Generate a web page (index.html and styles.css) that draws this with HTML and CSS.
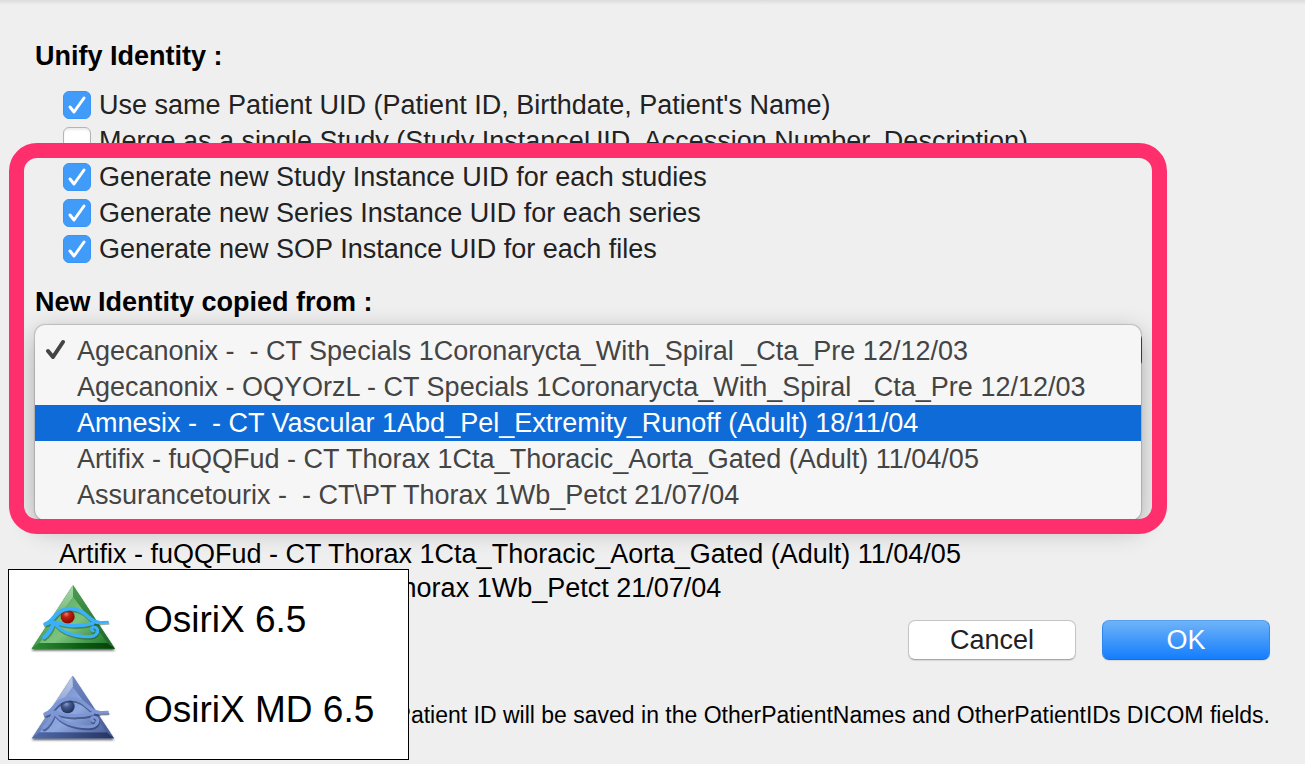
FILE: index.html
```
<!DOCTYPE html>
<html lang="en">
<head>
    <meta charset="UTF-8">
    <title>Anonymize</title>
    <link rel="stylesheet" href="styles.css">
</head>
<body>
    <form class="dialog">
        <h2>Unify Identity :</h2>
        <div class="options">
            <label><input type="checkbox" checked> Use same Patient UID (Patient ID, Birthdate, Patient's Name)</label>
            <label><input type="checkbox"> Merge as a single Study (Study InstanceUID, Accession Number, Description)</label>
            <label><input type="checkbox" checked> Generate new Study Instance UID for each studies</label>
            <label><input type="checkbox" checked> Generate new Series Instance UID for each series</label>
            <label><input type="checkbox" checked> Generate new SOP Instance UID for each files</label>
        </div>

        <h2><label for="identity">New Identity copied from :</label></h2>
        <div class="popup">
            <select id="identity" class="popup-select">
                <option>Agecanonix</option>
            </select>
            <div class="menu">
                <button type="button" class="menu-item">
                    <svg class="tick" viewBox="0 0 20 22"><path d="M2 12 L7 18 L17 3"/></svg>
                    Agecanonix -&nbsp; - CT Specials 1Coronarycta_With_Spiral _Cta_Pre 12/12/03
                </button>
                <button type="button" class="menu-item">Agecanonix - OQYOrzL - CT Specials 1Coronarycta_With_Spiral _Cta_Pre 12/12/03</button>
                <button type="button" class="menu-item selected">Amnesix -&nbsp; - CT Vascular 1Abd_Pel_Extremity_Runoff (Adult) 18/11/04</button>
                <button type="button" class="menu-item">Artifix - fuQQFud - CT Thorax 1Cta_Thoracic_Aorta_Gated (Adult) 11/04/05</button>
                <button type="button" class="menu-item">Assurancetourix -&nbsp; - CT\PT Thorax 1Wb_Petct 21/07/04</button>
            </div>
        </div>

        <ul class="studies">
            <li>Artifix - fuQQFud - CT Thorax 1Cta_Thoracic_Aorta_Gated (Adult) 11/04/05</li>
            <li>Assurancetourix -&nbsp; - CT\PT Thorax 1Wb_Petct 21/07/04</li>
        </ul>

        <div class="buttons">
            <button type="button" class="btn">Cancel</button>
            <button type="submit" class="btn btn-default">OK</button>
        </div>
        <p class="note">Patient ID will be saved in the OtherPatientNames and OtherPatientIDs DICOM fields.</p>

        <div class="highlight"></div>

        <div class="versions">
            <div class="version">
                <svg class="logo" viewBox="0 0 330 270">
                    <defs>
                        <linearGradient id="gFace" x1="0" y1="0.2" x2="1" y2="1">
                            <stop offset="0" stop-color="#5aa95f"/>
                            <stop offset="0.5" stop-color="#7cc47e"/>
                            <stop offset="1" stop-color="#247b2c"/>
                        </linearGradient>
                        <linearGradient id="gLeft" x1="0" y1="0" x2="0" y2="1">
                            <stop offset="0" stop-color="#a9d6aa"/>
                            <stop offset="1" stop-color="#3b9a43"/>
                        </linearGradient>
                        <linearGradient id="gRight" x1="0" y1="0" x2="0" y2="1">
                            <stop offset="0" stop-color="#4c9e51"/>
                            <stop offset="1" stop-color="#1c6524"/>
                        </linearGradient>
                        <linearGradient id="gBase">
                            <stop offset="0" stop-color="#2f8d37"/>
                            <stop offset="0.6" stop-color="#0c5a15"/>
                            <stop offset="1" stop-color="#06400b"/>
                        </linearGradient>
                        <radialGradient id="gPupil" cx="0.4" cy="0.3" r="0.7">
                            <stop offset="0" stop-color="#f08070"/>
                            <stop offset="0.35" stop-color="#c81e10"/>
                            <stop offset="1" stop-color="#7c0800"/>
                        </radialGradient>
                        <filter id="shadow" x="-20%" y="-20%" width="140%" height="140%">
                            <feDropShadow dx="0" dy="5" stdDeviation="3" flood-color="#000" flood-opacity="0.7"/>
                        </filter>
                        <g id="eye" fill="none" stroke-linecap="round" stroke-linejoin="round">
                            <path stroke-width="11" d="M75 147 C100 143 106 101 150 101 C200 101 206 142 236 142"/>
                            <path stroke-width="7" d="M232 142 L263 141"/>
                            <path stroke-width="10" d="M80 146 C94 140 104 140 116 145 C145 155 188 154 219 145"/>
                            <path stroke-width="12" d="M101 145 C96 158 85 179 72 187"/>
                            <path stroke-width="9" d="M105 145 C120 170 158 184 203 185 C233 186 241 165 226 157 C216 153 210 163 219 168"/>
                        </g>
                    </defs>
                    <path filter="url(#shadow)" fill="#2b8533" d="M159 31 L285 221 L35 221 Z"/>
                    <path fill="url(#gLeft)" d="M159 31 L160 66 L58 204 L35 221 Z"/>
                    <path fill="url(#gRight)" d="M159 31 L285 221 L262 204 L160 66 Z"/>
                    <path fill="url(#gBase)" d="M35 221 L58 204 L262 204 L285 221 Z"/>
                    <path fill="url(#gFace)" d="M160 66 L262 204 L58 204 Z"/>
                    <circle cx="143" cy="125" r="21" fill="url(#gPupil)"/>
                    <use href="#eye" stroke="#14502a" opacity="0.45" transform="translate(2 5)"/>
                    <use href="#eye" stroke="#3cb0fa"/>
                </svg>
                <span>OsiriX 6.5</span>
            </div>
            <div class="version">
                <svg class="logo" viewBox="0 0 330 270">
                    <defs>
                        <linearGradient id="bFace" x1="0" y1="0.2" x2="1" y2="1">
                            <stop offset="0" stop-color="#7590cf"/>
                            <stop offset="0.5" stop-color="#8fa8e0"/>
                            <stop offset="1" stop-color="#4c629f"/>
                        </linearGradient>
                        <linearGradient id="bLeft" x1="0" y1="0" x2="0" y2="1">
                            <stop offset="0" stop-color="#c0cdea"/>
                            <stop offset="1" stop-color="#5c77b8"/>
                        </linearGradient>
                        <linearGradient id="bRight" x1="0" y1="0" x2="0" y2="1">
                            <stop offset="0" stop-color="#728bc6"/>
                            <stop offset="1" stop-color="#44598f"/>
                        </linearGradient>
                        <linearGradient id="bBase">
                            <stop offset="0" stop-color="#516cab"/>
                            <stop offset="0.6" stop-color="#364a80"/>
                            <stop offset="1" stop-color="#24335e"/>
                        </linearGradient>
                        <radialGradient id="bPupil" cx="0.4" cy="0.3" r="0.7">
                            <stop offset="0" stop-color="#93a5ce"/>
                            <stop offset="0.4" stop-color="#43598f"/>
                            <stop offset="1" stop-color="#1f2f58"/>
                        </radialGradient>
                    </defs>
                    <path filter="url(#shadow)" fill="#536aa5" d="M158 32 L282 220 L36 220 Z"/>
                    <path fill="url(#bLeft)" d="M158 32 L159 66 L59 202 L36 220 Z"/>
                    <path fill="url(#bRight)" d="M158 32 L282 220 L260 202 L159 66 Z"/>
                    <path fill="url(#bBase)" d="M36 220 L59 202 L260 202 L282 220 Z"/>
                    <path fill="url(#bFace)" d="M159 66 L260 202 L59 202 Z"/>
                    <circle cx="143" cy="124" r="21" fill="url(#bPupil)"/>
                    <use href="#eye" stroke="#26355f" opacity="0.6" transform="translate(2 6)"/>
                    <use href="#eye" stroke="#7d97d6"/>
                </svg>
                <span>OsiriX MD 6.5</span>
            </div>
        </div>
    </form>
</body>
</html>
```

FILE: styles.css
```
* {
    box-sizing: border-box;
}
body {
    margin: 0;
    background: #efefef;
    color: #000;
    font-family: "Helvetica Neue", "Liberation Sans", Arial, sans-serif;
    font-size: 27px;
    line-height: 36px;
}
.dialog {
    position: relative;
    min-height: 100vh;
    padding: 38px 35px 0;
    background: linear-gradient(#dcdcdc, #efefef 5px);
    white-space: nowrap;
    overflow: hidden;
}
h2 {
    margin: 0;
    font-size: 27px;
    font-weight: bold;
}
.options {
    display: flex;
    flex-direction: column;
    align-items: flex-start;
    margin: 13px 0 17px 28px;
    color: #222;
}
.options label {
    display: flex;
    align-items: center;
    gap: 8px;
}
input[type="checkbox"] {
    appearance: none;
    width: 28px;
    height: 28px;
    margin: 0;
    border: 1px solid #b4b4b4;
    border-radius: 6px;
    background: #fff;
    box-shadow: inset 0 2px 2px rgba(0, 0, 0, 0.08);
}
input[type="checkbox"]:checked {
    border-color: #3a94f5;
    background: #419bf9 url("data:image/svg+xml,%3Csvg xmlns='http://www.w3.org/2000/svg' viewBox='0 0 26 26'%3E%3Cpath d='M6 15 L10 20 L20 6' fill='none' stroke='%23fff' stroke-width='3' stroke-linecap='round' stroke-linejoin='round'/%3E%3C/svg%3E") center / 26px 26px no-repeat;
    box-shadow: none;
}

/* pop-up button with its menu open on top of it */
.popup {
    position: relative;
    height: 42px;
    margin: 5px 128px 0 0;
}
.popup-select {
    appearance: none;
    width: 100%;
    height: 34px;
    margin-top: 8px;
    border: 0;
    border-radius: 6px;
    background: #1459b4;
    color: #fff;
    font: inherit;
}
.menu {
    position: absolute;
    top: 0;
    left: 0;
    right: 1px;
    padding: 8px 0 7px;
    border-radius: 10px;
    background: #f6f6f6;
    box-shadow: 0 0 1px 1px rgba(0, 0, 0, 0.16), 0 8px 26px rgba(0, 0, 0, 0.3);
}
.menu-item {
    display: block;
    position: relative;
    width: 100%;
    height: 36px;
    padding: 0 0 0 42px;
    border: 0;
    background: none;
    color: #444;
    font: inherit;
    text-align: left;
}
.menu-item.selected {
    background: #0f6bd7;
    color: #fff;
}
.tick {
    position: absolute;
    left: 11px;
    top: 6px;
    width: 20px;
    height: 22px;
    fill: none;
    stroke: #444;
    stroke-width: 4;
    stroke-linecap: round;
    stroke-linejoin: round;
}

.studies {
    margin: 170px 0 0 24px;
    padding: 0;
    list-style: none;
    line-height: 34px;
}
.buttons {
    display: flex;
    justify-content: flex-end;
    gap: 26px;
    margin-top: 15px;
}
.btn {
    width: 168px;
    height: 40px;
    padding: 0;
    border: 1px solid #c4c4c4;
    border-bottom-color: #a8a8a8;
    border-radius: 7px;
    background: #fff;
    box-shadow: 0 1px 1px rgba(0, 0, 0, 0.1);
    color: #222;
    font: inherit;
}
.btn-default {
    border-color: #56a0ec #2f87f0 #1a6fe0;
    background: linear-gradient(#6fb3f8, #147dfd);
    color: #fff;
}
.note {
    margin: 37px 0 0;
    font-size: 23px;
    text-align: right;
}

/* frame drawn over the dialog */
.highlight {
    position: absolute;
    top: 143px;
    left: 9px;
    right: 138px;
    height: 391px;
    border: 15px solid #ff2f6e;
    border-radius: 28px;
    pointer-events: none;
}

.versions {
    position: absolute;
    top: 569px;
    left: 8px;
    width: 401px;
    padding: 5px 11px 4px;
    border: 1px solid #000;
    background: #fff;
    font-size: 37px;
}
.version {
    display: flex;
    align-items: center;
    gap: 14px;
}
.logo {
    width: 110px;
    height: 90px;
}
```
